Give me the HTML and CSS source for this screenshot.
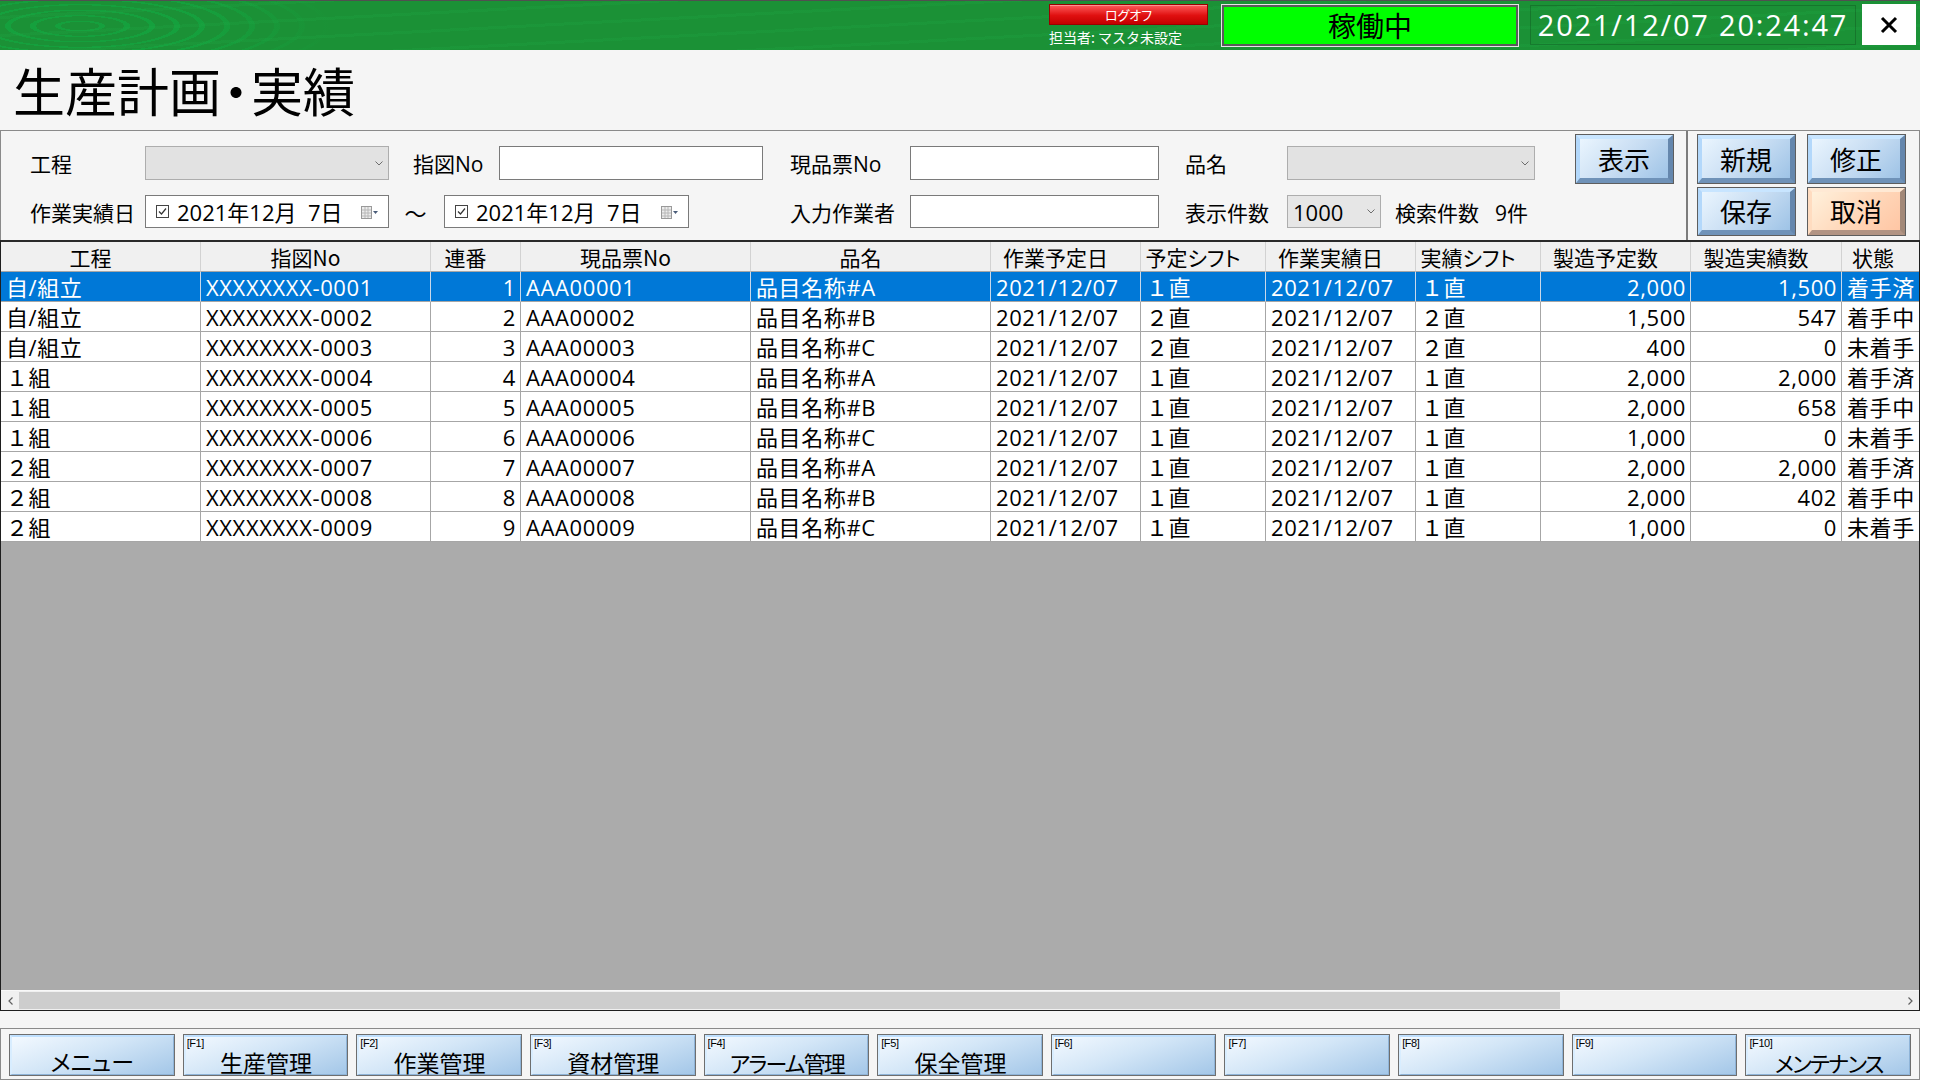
FILE: index.html
```html
<!DOCTYPE html>
<html lang="ja">
<head>
<meta charset="utf-8">
<title>生産計画・実績</title>
<link rel="stylesheet" href="styles.css">
</head>
<body>
<div class="app">
  <header class="topbar">
    <div class="user">
      <div class="logoff">ログオフ</div>
      <div class="tanto">担当者: マスタ未設定</div>
    </div>
    <div class="status">稼働中</div>
    <div class="clock">2021/12/07 20:24:47</div>
    <div class="close"><svg viewBox="0 0 20 20" width="20" height="20"><path d="M3 3L17 17M17 3L3 17" stroke="#000" stroke-width="3"/></svg></div>
  </header>

  <div class="title">生産計画<span class="dot">・</span>実績</div>

  <section class="search">
    <div class="fields">
      <div class="lbl c2">工程</div>
      <div class="combo dis c3"><svg class="chev" viewBox="0 0 8 5" width="8" height="5"><polyline points="0.5,0.5 4,4 7.5,0.5" fill="none" stroke="#6d6d6d" stroke-width="1"/></svg></div>
      <div class="lbl c45 pl24">指図No</div>
      <div class="input c67"></div>
      <div class="lbl c8 pl27">現品票No</div>
      <div class="input c9"></div>
      <div class="lbl c10 pl26">品名</div>
      <div class="combo dis c1112"><svg class="chev" viewBox="0 0 8 5" width="8" height="5"><polyline points="0.5,0.5 4,4 7.5,0.5" fill="none" stroke="#6d6d6d" stroke-width="1"/></svg></div>

      <div class="lbl c2">作業実績日</div>
      <div class="date c3">
        <svg class="chk" viewBox="0 0 13 13" width="13" height="13"><rect x="0.5" y="0.5" width="12" height="12" fill="#fff" stroke="#444"/><polyline points="3,6.5 5.5,9 10,3.5" fill="none" stroke="#333" stroke-width="1.2"/></svg>
        <span class="dtext">2021年12月&nbsp;&nbsp;7日</span>
        <svg class="cal" viewBox="0 0 18 14" width="18" height="14"><rect x="0.5" y="1.5" width="10" height="12" fill="#ececec" stroke="#9a9a9a"/><path d="M1 5h9M1 8h9M1 11h9M4 2v11M7 2v11" stroke="#b8b8b8" stroke-width="1"/><path d="M12 6h5l-2.5 3z" fill="#4a5d7a"/></svg>
      </div>
      <div class="tilde c4">～</div>
      <div class="date c56">
        <svg class="chk" viewBox="0 0 13 13" width="13" height="13"><rect x="0.5" y="0.5" width="12" height="12" fill="#fff" stroke="#444"/><polyline points="3,6.5 5.5,9 10,3.5" fill="none" stroke="#333" stroke-width="1.2"/></svg>
        <span class="dtext">2021年12月&nbsp;&nbsp;7日</span>
        <svg class="cal" viewBox="0 0 18 14" width="18" height="14"><rect x="0.5" y="1.5" width="10" height="12" fill="#ececec" stroke="#9a9a9a"/><path d="M1 5h9M1 8h9M1 11h9M4 2v11M7 2v11" stroke="#b8b8b8" stroke-width="1"/><path d="M12 6h5l-2.5 3z" fill="#4a5d7a"/></svg>
      </div>
      <div class="lbl c8 pl27">入力作業者</div>
      <div class="input c9"></div>
      <div class="lbl c10 pl26">表示件数</div>
      <div class="combo light c11"><span class="ctext">1000</span><svg class="chev" viewBox="0 0 8 5" width="8" height="5"><polyline points="0.5,0.5 4,4 7.5,0.5" fill="none" stroke="#6d6d6d" stroke-width="1"/></svg></div>
      <div class="lbl c12 pl14">検索件数<span class="count">9件</span></div>
    </div>

    <div class="show-area">
      <div class="bevel"><span class="face">表示</span></div>
    </div>
    <div class="divider"></div>
    <div class="actions">
      <div class="bevel"><span class="face">新規</span></div>
      <div class="bevel"><span class="face">修正</span></div>
      <div class="bevel"><span class="face">保存</span></div>
      <div class="bevel orange"><span class="face">取消</span></div>
    </div>
  </section>

  <section class="grid">
    <div class="grid-view">
      <div class="tr thead">
        <div class="th">工程</div><div class="th">指図No</div><div class="th">連番</div><div class="th">現品票No</div><div class="th">品名</div><div class="th">作業予定日</div><div class="th">予定シフト</div><div class="th">作業実績日</div><div class="th">実績シフト</div><div class="th">製造予定数</div><div class="th">製造実績数</div><div class="th last">状態</div>
      </div>
      <div class="tr sel">
        <div class="td">自/組立</div><div class="td">XXXXXXXX-0001</div><div class="td num">1</div><div class="td">AAA00001</div><div class="td">品目名称#A</div><div class="td">2021/12/07</div><div class="td">１直</div><div class="td">2021/12/07</div><div class="td">１直</div><div class="td num">2,000</div><div class="td num">1,500</div><div class="td">着手済</div>
      </div>
      <div class="tr">
        <div class="td">自/組立</div><div class="td">XXXXXXXX-0002</div><div class="td num">2</div><div class="td">AAA00002</div><div class="td">品目名称#B</div><div class="td">2021/12/07</div><div class="td">２直</div><div class="td">2021/12/07</div><div class="td">２直</div><div class="td num">1,500</div><div class="td num">547</div><div class="td">着手中</div>
      </div>
      <div class="tr">
        <div class="td">自/組立</div><div class="td">XXXXXXXX-0003</div><div class="td num">3</div><div class="td">AAA00003</div><div class="td">品目名称#C</div><div class="td">2021/12/07</div><div class="td">２直</div><div class="td">2021/12/07</div><div class="td">２直</div><div class="td num">400</div><div class="td num">0</div><div class="td">未着手</div>
      </div>
      <div class="tr">
        <div class="td">１組</div><div class="td">XXXXXXXX-0004</div><div class="td num">4</div><div class="td">AAA00004</div><div class="td">品目名称#A</div><div class="td">2021/12/07</div><div class="td">１直</div><div class="td">2021/12/07</div><div class="td">１直</div><div class="td num">2,000</div><div class="td num">2,000</div><div class="td">着手済</div>
      </div>
      <div class="tr">
        <div class="td">１組</div><div class="td">XXXXXXXX-0005</div><div class="td num">5</div><div class="td">AAA00005</div><div class="td">品目名称#B</div><div class="td">2021/12/07</div><div class="td">１直</div><div class="td">2021/12/07</div><div class="td">１直</div><div class="td num">2,000</div><div class="td num">658</div><div class="td">着手中</div>
      </div>
      <div class="tr">
        <div class="td">１組</div><div class="td">XXXXXXXX-0006</div><div class="td num">6</div><div class="td">AAA00006</div><div class="td">品目名称#C</div><div class="td">2021/12/07</div><div class="td">１直</div><div class="td">2021/12/07</div><div class="td">１直</div><div class="td num">1,000</div><div class="td num">0</div><div class="td">未着手</div>
      </div>
      <div class="tr">
        <div class="td">２組</div><div class="td">XXXXXXXX-0007</div><div class="td num">7</div><div class="td">AAA00007</div><div class="td">品目名称#A</div><div class="td">2021/12/07</div><div class="td">１直</div><div class="td">2021/12/07</div><div class="td">１直</div><div class="td num">2,000</div><div class="td num">2,000</div><div class="td">着手済</div>
      </div>
      <div class="tr">
        <div class="td">２組</div><div class="td">XXXXXXXX-0008</div><div class="td num">8</div><div class="td">AAA00008</div><div class="td">品目名称#B</div><div class="td">2021/12/07</div><div class="td">１直</div><div class="td">2021/12/07</div><div class="td">１直</div><div class="td num">2,000</div><div class="td num">402</div><div class="td">着手中</div>
      </div>
      <div class="tr">
        <div class="td">２組</div><div class="td">XXXXXXXX-0009</div><div class="td num">9</div><div class="td">AAA00009</div><div class="td">品目名称#C</div><div class="td">2021/12/07</div><div class="td">１直</div><div class="td">2021/12/07</div><div class="td">１直</div><div class="td num">1,000</div><div class="td num">0</div><div class="td">未着手</div>
      </div>
    </div>
    <div class="empty"></div>
    <div class="hscroll">
      <div class="arrow"><svg viewBox="0 0 5 8" width="5" height="8"><polyline points="4.5,0.5 1,4 4.5,7.5" fill="none" stroke="#606060" stroke-width="1.2"/></svg></div>
      <div class="thumb"></div>
      <div class="track"></div>
      <div class="arrow"><svg viewBox="0 0 5 8" width="5" height="8"><polyline points="0.5,0.5 4,4 0.5,7.5" fill="none" stroke="#606060" stroke-width="1.2"/></svg></div>
    </div>
  </section>

  <footer class="fkeys">
    <div class="fk"><span class="face"><span class="code"></span><span class="flabel">メニュー</span></span></div>
    <div class="fk"><span class="face"><span class="code">[F1]</span><span class="flabel">生産管理</span></span></div>
    <div class="fk"><span class="face"><span class="code">[F2]</span><span class="flabel">作業管理</span></span></div>
    <div class="fk"><span class="face"><span class="code">[F3]</span><span class="flabel">資材管理</span></span></div>
    <div class="fk"><span class="face"><span class="code">[F4]</span><span class="flabel tight">アラーム管理</span></span></div>
    <div class="fk"><span class="face"><span class="code">[F5]</span><span class="flabel">保全管理</span></span></div>
    <div class="fk"><span class="face"><span class="code">[F6]</span><span class="flabel"></span></span></div>
    <div class="fk"><span class="face"><span class="code">[F7]</span><span class="flabel"></span></span></div>
    <div class="fk"><span class="face"><span class="code">[F8]</span><span class="flabel"></span></span></div>
    <div class="fk"><span class="face"><span class="code">[F9]</span><span class="flabel"></span></span></div>
    <div class="fk"><span class="face"><span class="code">[F10]</span><span class="flabel tight">メンテナンス</span></span></div>
  </footer>
</div>
</body>
</html>
```
FILE: styles.css
```css
* { box-sizing: border-box; }
html, body { margin: 0; padding: 0; background: #ffffff; }
body {
  font-family: "Open Sans", "Noto Sans CJK JP", sans-serif;
  color: #000;
}
.app {
  width: 1920px;
  height: 1080px;
  background: #f5f5f5;
  display: flex;
  flex-direction: column;
  overflow: hidden;
}

/* ---------- top bar ---------- */
.topbar {
  height: 50px;
  flex: none;
  border-top: 1px solid #505050;
  display: flex;
  justify-content: flex-end;
  align-items: flex-start;
  padding-right: 4px;
  background:
    repeating-linear-gradient(177deg, rgba(255,255,255,0) 0 15px, rgba(30,170,70,0.22) 15px 18px),
    linear-gradient(90deg, rgba(27,145,54,0) 0, rgba(27,145,54,0) 190px, #1b9136 330px),
    repeating-radial-gradient(ellipse 300px 66px at 80px 25px, #1b9136 0 19px, #15a03d 19px 25px),
    #1b9136;
}
.user { width: 159px; margin-top: 3px; }
.logoff {
  height: 21px;
  background: linear-gradient(#ff5c5c, #e01010 55%, #c40000);
  border: 1px solid #9a0000;
  box-shadow: inset 0 1px 0 rgba(255,255,255,0.35);
  color: #fff;
  font-family: "Noto Sans CJK JP", sans-serif;
  font-size: 13px;
  line-height: 19px;
  text-align: center;
  font-feature-settings: "palt";
}
.tanto {
  margin-top: 3px;
  color: #fff;
  font-family: "Noto Sans CJK JP", sans-serif;
  font-size: 14px;
  line-height: 18px;
  white-space: nowrap;
}
.status {
  margin-left: 14px;
  margin-top: 4px;
  width: 296px;
  height: 41px;
  background: #00ff00;
  border: 2px solid #5a5a5a;
  outline: 1px solid #e6e6e6;
  font-family: "Noto Sans CJK JP", sans-serif;
  font-size: 28px;
  line-height: 36px;
  text-align: center;
  color: #000;
}
.clock {
  margin-left: 12px;
  margin-top: 4px;
  width: 326px;
  height: 40px;
  border: 1px solid rgba(0,0,0,0.18);
  color: #fff;
  font-size: 29px;
  line-height: 37px;
  letter-spacing: 1.8px;
  text-align: center;
  white-space: nowrap;
}
.close {
  margin-left: 6px;
  margin-top: 3px;
  width: 54px;
  height: 41px;
  background: #fff;
  display: flex;
  align-items: center;
  justify-content: center;
}

/* ---------- title ---------- */
.title {
  height: 80px;
  flex: none;
  padding-left: 13px;
  font-family: "Noto Sans CJK JP", sans-serif;
  font-size: 52px;
  line-height: 80px;
  white-space: nowrap;
}
.dot { font-feature-settings: "palt"; margin: 0 2px; }

/* ---------- search panel ---------- */
.search {
  height: 110px;
  flex: none;
  border-top: 1px solid #8a8a8a;
  border-left: 1px solid #8a8a8a;
  border-right: 1px solid #8a8a8a;
  display: flex;
  align-items: flex-start;
}
.fields {
  width: 1534px;
  flex: none;
  padding-top: 15px;
  display: grid;
  grid-template-columns: 29px 115px 244px 55px 55px 190px 74px 147px 249px 128px 94px 154px;
  grid-template-rows: 34px 33px;
  row-gap: 15px;
  font-size: 21px;
}
.lbl {
  display: flex;
  align-items: center;
  white-space: nowrap;
  font-size: 21px;
}
.c2 { grid-column: 2; }
.c3 { grid-column: 3; }
.c4 { grid-column: 4; }
.c45 { grid-column: 4 / 6; }
.c56 { grid-column: 5 / 7; }
.c67 { grid-column: 6 / 8; }
.c8 { grid-column: 8; }
.c9 { grid-column: 9; }
.c10 { grid-column: 10; }
.c11 { grid-column: 11; }
.c12 { grid-column: 12; }
.c1112 { grid-column: 11 / 13; }
.pl24 { padding-left: 24px; }
.pl27 { padding-left: 27px; }
.pl26 { padding-left: 26px; }
.pl14 { padding-left: 14px; }
.count { margin-left: 16px; }

.input {
  background: #fff;
  border: 1px solid #7a7a7a;
}
.combo {
  border: 1px solid #adadad;
  display: flex;
  align-items: center;
  padding-right: 5px;
}
.combo.dis { background: #e2e2e2; justify-content: flex-end; }
.combo.light { background: #e6e6e6; justify-content: space-between; padding-left: 5px; }
.ctext { font-size: 22px; line-height: 30px; }
.date {
  background: #fff;
  border: 1px solid #7a7a7a;
  display: flex;
  align-items: center;
  padding-left: 10px;
  padding-right: 9px;
}
.chk { flex: none; }
.dtext {
  margin-left: 8px;
  font-size: 22px;
  line-height: 30px;
  white-space: nowrap;
  flex: 1;
}
.cal { flex: none; }
.tilde {
  display: flex;
  align-items: center;
  justify-content: center;
  font-family: "Noto Sans CJK JP", sans-serif;
  font-size: 22px;
  padding-right: 2px;
}

.show-area { margin-left: 40px; padding-top: 3px; }
.divider {
  margin-left: 12px;
  width: 2px;
  align-self: stretch;
  background: #7c7c7c;
}
.actions {
  margin-left: 9px;
  padding-top: 3px;
  display: grid;
  grid-template-columns: 99px 99px;
  grid-template-rows: 50px 49px;
  column-gap: 11px;
  row-gap: 3px;
}
.bevel {
  width: 99px;
  height: 50px;
  border: 1px solid #5e5e5e;
  display: flex;
}
.actions .bevel { height: auto; }
.bevel .face {
  flex: 1;
  border-style: solid;
  border-width: 4px 5px 5px 4px;
  border-color: #c8e5ff #6587ad #6f92b8 #b3d8fb;
  background: linear-gradient(135deg, #eaf5fe 0%, #c9def3 50%, #9ec3e6 100%);
  display: flex;
  align-items: center;
  justify-content: center;
  font-family: "Noto Sans CJK JP", sans-serif;
  font-size: 26px;
  line-height: 30px;
}
.bevel.orange .face {
  border-color: #ffe9d4 #a28878 #b29484 #ffdcc0;
  background: linear-gradient(135deg, #fff1dc 0%, #ffd9bc 50%, #ffc6a4 100%);
}

/* ---------- grid ---------- */
.grid {
  height: 771px;
  flex: none;
  border: 1px solid #1e1e1e;
  border-top: 2px solid #2a2a2a;
  display: flex;
  flex-direction: column;
  overflow: hidden;
}
.grid-view { overflow: hidden; flex: none; }
.tr {
  display: grid;
  grid-template-columns: 200px 230px 90px 230px 240px 150px 125px 150px 125px 150px 151px 110px;
  height: 30px;
  width: 1951px;
  background: #fff;
  font-size: 22px;
  letter-spacing: 0.6px;
}
.th, .td {
  border-right: 1px solid #a6a6a6;
  border-bottom: 1px solid #a6a6a6;
  white-space: nowrap;
  overflow: hidden;
}
.thead { background: #f0f0f0; }
.th {
  text-align: center;
  font-size: 21px;
  letter-spacing: 0;
  border-right-color: #d2d2d2;
  font-family: "Noto Sans CJK JP", sans-serif;
  font-feature-settings: "palt";
  padding: 1px 20px 0 0;
  line-height: 28px;
}
.th.last { text-align: left; padding: 1px 0 0 10px; }
.td { padding: 2px 5px 0; line-height: 27px; }
.td.num { text-align: right; padding-right: 4px; }
.tr.sel { background: #0078d7; color: #fff; }
.tr.sel .td { border-right-color: #c8d8ea; }
.empty { flex: 1; background: #ababab; }
.hscroll {
  height: 20px;
  flex: none;
  background: #f0f0f0;
  border-top: 1px solid #f8f8f8;
  display: flex;
  align-items: center;
}
.arrow {
  width: 18px;
  height: 19px;
  display: flex;
  align-items: center;
  justify-content: center;
  flex: none;
}
.thumb { width: 1541px; height: 17px; background: #cdcdcd; flex: none; }
.track { flex: 1; }

/* ---------- function keys ---------- */
.fkeys {
  margin-top: 17px;
  height: 52px;
  flex: none;
  border: 1px solid #8a8a8a;
  padding: 5px 8px 3px;
  display: flex;
  gap: 8px;
}
.fk {
  flex: 1;
  border: 1px solid #6e6e6e;
  display: flex;
}
.fk .face {
  flex: 1;
  border-style: solid;
  border-width: 2px 1px 1px 2px;
  border-color: #bfe0ff #8fb4d8 #8fb4d8 #d8edff;
  background: linear-gradient(160deg, #f3f9ff 0%, #d3e6f7 45%, #a4c7e8 100%);
  display: flex;
  flex-direction: column;
  font-family: "Noto Sans CJK JP", sans-serif;
}
.code {
  height: 12px;
  padding-left: 1px;
  font-size: 11px;
  line-height: 12px;
  letter-spacing: -0.4px;
  font-family: "Liberation Sans", sans-serif;
  white-space: nowrap;
}
.flabel {
  text-align: center;
  font-size: 23px;
  line-height: 26px;
  font-feature-settings: "palt";
  white-space: nowrap;
}
.flabel.tight { font-size: 22px; letter-spacing: -1.8px; }
```
